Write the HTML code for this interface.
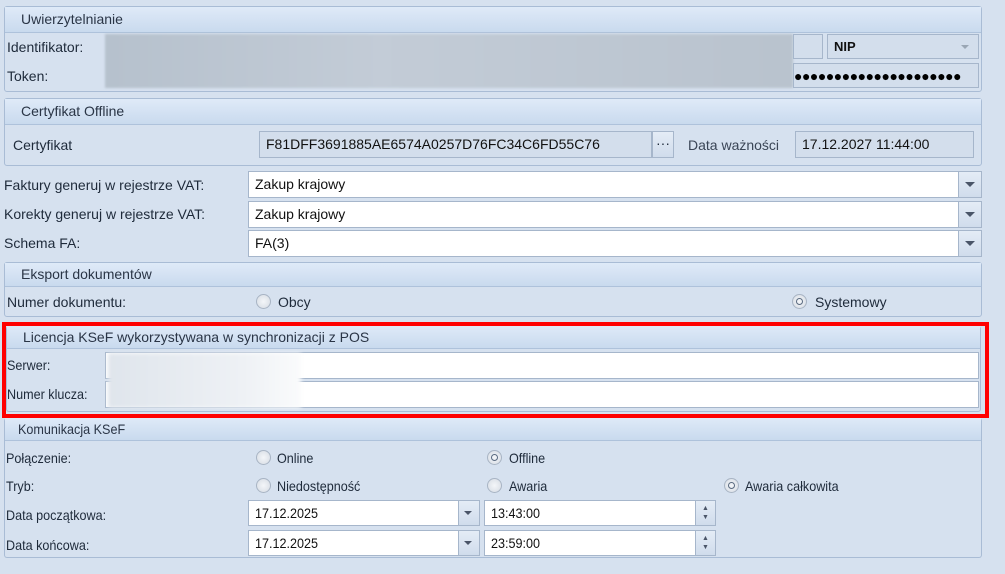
<!DOCTYPE html>
<html><head><meta charset="utf-8"><style>
*{box-sizing:border-box;margin:0;padding:0}
body{width:1005px;height:574px;background:#d6e1ef;font-family:"Liberation Sans",sans-serif;font-size:14px;color:#1e2a3a;position:relative;overflow:hidden}
.a{position:absolute}
.grp{position:absolute;border:1px solid #a9bcd5;border-radius:3px;background:#d6e1ef}
.hd{position:absolute;left:0;right:0;top:0;background:linear-gradient(#dfeaf8,#c9daee);border-bottom:1px solid #aec2db;padding-left:16px;color:#2a3546;font-size:14px}
.f{position:absolute;border:1px solid #a6b6cb;background:#fff;padding-left:6px;line-height:24px;color:#111}
.fg{background:#d3deec}
.btn{position:absolute;border:1px solid #a6b6cb;background:linear-gradient(#e4ecf6,#d0dcec)}
.tri{position:absolute;width:0;height:0;border-left:5px solid transparent;border-right:5px solid transparent;border-top:5px solid #4a5568}
.lb{position:absolute;line-height:18px}
.r{position:absolute;width:15px;height:15px;border-radius:50%;border:1px solid #a8b4c4;background:radial-gradient(#f4f6f9,#d5dbe3)}
.r.on::after{content:"";position:absolute;left:3px;top:3px;width:7px;height:7px;border-radius:50%;border:1.5px solid #5a6a80;box-sizing:border-box}
.c{font-size:14px;transform:scaleX(0.9);transform-origin:0 0}
</style></head><body>

<div class="grp" style="left:4px;top:6px;width:978px;height:86px">
 <div class="hd" style="height:26px;line-height:25px">Uwierzytelnianie</div>
</div>
<div class="lb" style="left:7px;top:38px">Identifikator:</div>
<div class="lb" style="left:7px;top:67px">Token:</div>
<div class="a" style="left:105px;top:34px;width:688px;height:54px;background:linear-gradient(90deg,#b6c1cd,#c3ccd7 40%,#b9c3ce);filter:blur(1px)"></div>
<div class="f fg" style="left:793px;top:34px;width:30px;height:25px"></div>
<div class="f fg" style="left:827px;top:34px;width:152px;height:25px;font-weight:bold;font-size:13px">NIP</div>
<div class="tri" style="left:961px;top:45px;border-top-color:#9aa6b4;border-width:4px 4px 0 4px"></div>
<div class="f fg" style="left:793px;top:63px;width:186px;height:25px;padding-left:0;letter-spacing:-0.5px;font-size:14px;font-weight:bold;overflow:hidden;white-space:nowrap;color:#000">●●●●●●●●●●●●●●●●●●●●●</div>

<div class="grp" style="left:4px;top:98px;width:978px;height:68px">
 <div class="hd" style="height:26px;line-height:25px">Certyfikat Offline</div>
</div>
<div class="lb" style="left:13px;top:136px">Certyfikat</div>
<div class="f fg" style="left:259px;top:131px;width:393px;height:27px">F81DFF3691885AE6574A0257D76FC34C6FD55C76</div>
<div class="btn" style="left:652px;top:131px;width:22px;height:27px;text-align:center;line-height:22px">···</div>
<div class="lb" style="left:688px;top:136px;color:#3a4556">Data ważności</div>
<div class="f fg" style="left:795px;top:131px;width:179px;height:27px">17.12.2027 11:44:00</div>

<div class="lb" style="left:4px;top:176px">Faktury generuj w rejestrze VAT:</div>
<div class="f" style="left:248px;top:171px;width:711px;height:27px">Zakup krajowy</div>
<div class="btn" style="left:958px;top:171px;width:24px;height:27px"><div class="tri" style="left:6px;top:10px"></div></div>
<div class="lb" style="left:4px;top:205px">Korekty generuj w rejestrze VAT:</div>
<div class="f" style="left:248px;top:201px;width:711px;height:27px">Zakup krajowy</div>
<div class="btn" style="left:958px;top:201px;width:24px;height:27px"><div class="tri" style="left:6px;top:10px"></div></div>
<div class="lb" style="left:4px;top:234px">Schema FA:</div>
<div class="f" style="left:248px;top:230px;width:711px;height:27px">FA(3)</div>
<div class="btn" style="left:958px;top:230px;width:24px;height:27px"><div class="tri" style="left:6px;top:10px"></div></div>

<div class="grp" style="left:4px;top:262px;width:978px;height:55px">
 <div class="hd" style="height:24px;line-height:23px">Eksport dokumentów</div>
</div>
<div class="lb" style="left:7px;top:293px">Numer dokumentu:</div>
<div class="r" style="left:256px;top:294px"></div><div class="lb" style="left:278px;top:293px">Obcy</div>
<div class="r on" style="left:792px;top:294px"></div><div class="lb" style="left:815px;top:293px">Systemowy</div>

<div class="a" style="left:2px;top:322px;width:987px;height:96px;border:4px solid #f00"></div>
<div class="grp" style="left:6px;top:326px;width:975px;height:86px;border-top:none">
 <div class="hd" style="height:23px;line-height:22px">Licencja KSeF wykorzystywana w synchronizacji z POS</div>
</div>
<div class="lb c" style="left:7px;top:356px">Serwer:</div>
<div class="lb c" style="left:7px;top:385px">Numer klucza:</div>
<div class="f" style="left:105px;top:352px;width:874px;height:27px"></div>
<div class="f" style="left:105px;top:381px;width:874px;height:27px"></div>
<div class="a" style="left:108px;top:353px;width:193px;height:55px;background:linear-gradient(90deg,#dfe5ec,#eef1f5 70%,#fafbfc);filter:blur(2px)"></div>

<div class="grp" style="left:4px;top:418px;width:978px;height:140px;border-top:none">
 <div class="hd" style="height:23px;line-height:22px;font-size:14px;padding-left:13px"><span style="display:inline-block;transform:scaleX(0.9);transform-origin:0 0">Komunikacja KSeF</span></div>
</div>
<div class="lb c" style="left:6px;top:449px">Połączenie:</div>
<div class="r" style="left:256px;top:450px"></div><div class="lb c" style="left:277px;top:449px">Online</div>
<div class="r on" style="left:487px;top:450px"></div><div class="lb c" style="left:509px;top:449px">Offline</div>
<div class="lb c" style="left:6px;top:477px">Tryb:</div>
<div class="r" style="left:256px;top:478px"></div><div class="lb c" style="left:277px;top:477px">Niedostępność</div>
<div class="r" style="left:487px;top:478px"></div><div class="lb c" style="left:509px;top:477px">Awaria</div>
<div class="r on" style="left:724px;top:478px"></div><div class="lb c" style="left:745px;top:477px">Awaria całkowita</div>

<div class="lb c" style="left:6px;top:506px">Data początkowa:</div>
<div class="f" style="left:248px;top:500px;width:211px;height:26px"><span class="c" style="display:inline-block">17.12.2025</span></div>
<div class="btn" style="left:458px;top:500px;width:22px;height:26px"><div class="tri" style="left:5px;top:10px;border-width:4px 4px 0 4px"></div></div>
<div class="f" style="left:484px;top:500px;width:212px;height:26px"><span class="c" style="display:inline-block">13:43:00</span></div>
<div class="btn" style="left:695px;top:500px;width:21px;height:26px;font-size:7px;text-align:center;line-height:9px;padding-top:3px;color:#4a5568">▲<br>▼</div>
<div class="lb c" style="left:6px;top:536px">Data końcowa:</div>
<div class="f" style="left:248px;top:530px;width:211px;height:26px"><span class="c" style="display:inline-block">17.12.2025</span></div>
<div class="btn" style="left:458px;top:530px;width:22px;height:26px"><div class="tri" style="left:5px;top:10px;border-width:4px 4px 0 4px"></div></div>
<div class="f" style="left:484px;top:530px;width:212px;height:26px"><span class="c" style="display:inline-block">23:59:00</span></div>
<div class="btn" style="left:695px;top:530px;width:21px;height:26px;font-size:7px;text-align:center;line-height:9px;padding-top:3px;color:#4a5568">▲<br>▼</div>
</body></html>
